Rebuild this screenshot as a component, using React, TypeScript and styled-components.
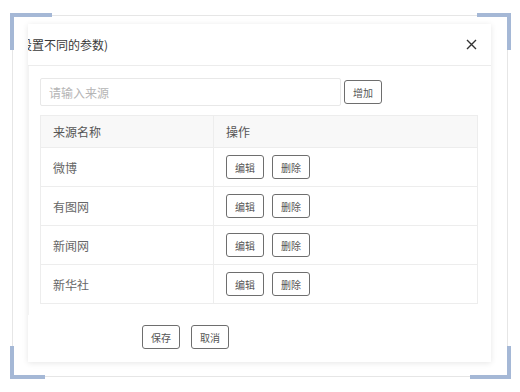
import styled, { createGlobalStyle, css } from 'styled-components';

const GlobalStyle = createGlobalStyle`
  html, body {
    margin: 0;
    padding: 0;
    background: #ffffff;
    font-family: "Noto Sans CJK SC", "Noto Sans", sans-serif;
  }
`;

const sources = ['微博', '有图网', '新闻网', '新华社'];

type Corner = 'tl' | 'tr' | 'bl' | 'br';

export default function App() {
  return (
    <>
      <GlobalStyle />
      <StPage>
        <StFrame>
          <StBracket $corner="tl" />
          <StBracket $corner="tr" />
          <StBracket $corner="bl" />
          <StBracket $corner="br" />
          <StDialog>
            <StHeader>
              <StTitleClip>
                <h2>来源配置(可为每个来源设置不同的参数)</h2>
              </StTitleClip>
              <StClose aria-label="关闭">
                <svg width="11" height="11" viewBox="0 0 11 11">
                  <path d="M1 1L10 10M10 1L1 10" stroke="#333" strokeWidth="1.4" fill="none" />
                </svg>
              </StClose>
            </StHeader>
            <StBody>
              <StAddRow>
                <StInput placeholder="请输入来源" />
                <StButton>增加</StButton>
              </StAddRow>
              <StTable>
                <thead>
                  <tr>
                    <th>来源名称</th>
                    <th>操作</th>
                  </tr>
                </thead>
                <tbody>
                  {sources.map((name) => (
                    <tr key={name}>
                      <td>{name}</td>
                      <td>
                        <StActions>
                          <StButton>编辑</StButton>
                          <StButton>删除</StButton>
                        </StActions>
                      </td>
                    </tr>
                  ))}
                </tbody>
              </StTable>
            </StBody>
            <StFooter>
              <StButton>保存</StButton>
              <StButton>取消</StButton>
            </StFooter>
          </StDialog>
        </StFrame>
      </StPage>
    </>
  );
}

const StPage = styled.div`
  width: 520px;
  height: 392px;
  padding: 15px 12px 0 12px;
  box-sizing: border-box;
`;

const StFrame = styled.div`
  position: relative;
  width: 496px;
  height: 362px;
  box-sizing: border-box;
  border: 1px solid #e6e6e6;
  padding: 8px 16px 14px 15px;
`;

const cornerStyles: Record<Corner, ReturnType<typeof css>> = {
  tl: css`
    top: -3px;
    left: -3px;
    border-top: 4px solid #a5b8d6;
    border-left: 4px solid #a5b8d6;
    width: 38px;
    height: 33px;
  `,
  tr: css`
    top: -3px;
    right: -4px;
    border-top: 4px solid #a5b8d6;
    border-right: 4px solid #a5b8d6;
    width: 30px;
    height: 33px;
  `,
  bl: css`
    bottom: -3px;
    left: -3px;
    border-bottom: 4px solid #a5b8d6;
    border-left: 4px solid #a5b8d6;
    width: 31px;
    height: 29px;
  `,
  br: css`
    bottom: -3px;
    right: -4px;
    border-bottom: 4px solid #a5b8d6;
    border-right: 4px solid #a5b8d6;
    width: 37px;
    height: 29px;
  `,
};

const StBracket = styled.span<{ $corner: Corner }>`
  position: absolute;
  ${({ $corner }) => cornerStyles[$corner]}
`;

const StDialog = styled.div`
  height: 100%;
  background: #fff;
  box-shadow: 0 1px 6px rgba(0, 0, 0, 0.1);
  overflow: hidden;
  display: flex;
  flex-direction: column;
`;

const StHeader = styled.div`
  height: 41px;
  flex-shrink: 0;
  border-bottom: 1px solid #ececec;
  display: flex;
  align-items: center;
  justify-content: space-between;
  padding-right: 14px;
`;

const StTitleClip = styled.div`
  width: 80px;
  overflow: hidden;
  display: flex;
  justify-content: flex-end;
  white-space: nowrap;

  h2 {
    margin: 0;
    font-size: 12px;
    font-weight: normal;
    color: #3a3a3a;
    line-height: 20px;
  }
`;

const StClose = styled.button`
  border: 0;
  background: none;
  padding: 0;
  display: flex;
`;

const StBody = styled.div`
  padding: 12px 13px 0 11px;
  border-left: 1px solid #f3f3f3;
  height: 249px;
  box-sizing: border-box;
`;

const StAddRow = styled.div`
  display: flex;
  align-items: center;
  gap: 3px;
  margin-bottom: 9px;
`;

const StInput = styled.input`
  width: 301px;
  height: 28px;
  box-sizing: border-box;
  border: 1px solid #e8e8e8;
  border-radius: 2px;
  padding: 0 8px;
  font-family: inherit;
  font-size: 12px;
  outline: none;

  &::placeholder {
    color: #b5b5b5;
  }
`;

const StButton = styled.button`
  width: 38px;
  height: 24px;
  box-sizing: border-box;
  border: 1px solid #6e6e6e;
  border-radius: 3px;
  background: #fff;
  color: #555;
  font-family: inherit;
  font-size: 10px;
  padding: 0;
  display: flex;
  align-items: center;
  justify-content: center;
`;

const StTable = styled.table`
  width: 438px;
  border-collapse: collapse;
  border: 1px solid #ededed;
  font-size: 12px;
  color: #666;

  th,
  td {
    border: 1px solid #ededed;
    padding: 0 12px;
    text-align: left;
    font-weight: normal;
  }

  th {
    height: 31px;
    background: #f8f8f8;
    color: #555;
  }

  th:first-child,
  td:first-child {
    width: 148px;
  }

  td {
    height: 38px;
  }
`;

const StActions = styled.div`
  display: flex;
  gap: 8px;
`;

const StFooter = styled.div`
  display: flex;
  gap: 11px;
  padding: 10px 0 0 114px;
`;
